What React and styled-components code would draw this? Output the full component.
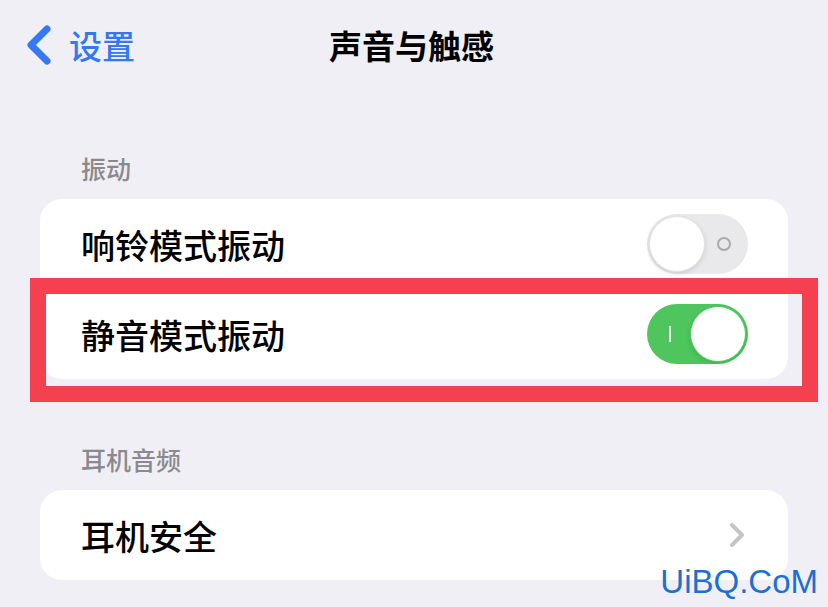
import * as React from 'react';
import styled, { createGlobalStyle } from 'styled-components';

const GlobalStyle = createGlobalStyle`
  html, body {
    margin: 0;
    padding: 0;
    background: #f0eff5;
  }
  body {
    font-family: 'Noto Sans CJK SC', 'Noto Sans', sans-serif;
  }
`;

const Page = styled.div`
  position: relative;
  width: 828px;
  height: 607px;
  overflow: hidden;
  background: #f0eff5;
  display: flex;
  flex-direction: column;
`;

const NavBar = styled.div`
  height: 90px;
  display: grid;
  grid-template-columns: 1fr auto 1fr;
  align-items: center;
  padding: 0 0 0 25px;
`;

const BackButton = styled.div`
  display: flex;
  align-items: center;
  gap: 16px;
  color: #3478f6;
  font-size: 33px;
  font-weight: 500;
  line-height: 1;
`;

const Title = styled.div`
  font-size: 33px;
  font-weight: 700;
  color: #000;
  line-height: 1;
  margin-right: 30px;
`;

const Content = styled.div`
  padding: 0 40px;
  display: flex;
  flex-direction: column;
`;

const SectionHeader = styled.div`
  margin-top: ${(props) => props.top}px;
  margin-bottom: 16px;
  padding-left: 41px;
  font-size: 25px;
  line-height: 30px;
  color: #8a8a8e;
  font-weight: 500;
`;

const Card = styled.div`
  background: #fff;
  border-radius: 22px;
  overflow: hidden;
`;

const Row = styled.div`
  height: 90px;
  display: flex;
  align-items: center;
  justify-content: space-between;
  padding: 0 ${(props) => (props.chevron ? 43 : 40)}px 0 41px;
  font-size: 34px;
  font-weight: 500;
  color: #000;
`;

const Track = styled.div`
  position: relative;
  width: 101px;
  height: 60px;
  border-radius: 30px;
  background: ${(props) => (props.on ? '#4ec65d' : '#e9e9eb')};
  flex-shrink: 0;
`;

const Knob = styled.div`
  position: absolute;
  top: 2px;
  left: ${(props) => (props.on ? '43px' : '2px')};
  width: 56px;
  height: 56px;
  border-radius: 50%;
  background: #fff;
  box-sizing: border-box;
  border: 1px solid ${(props) => (props.on ? '#4ec65d' : '#e2e2e4')};
  box-shadow: 0 2px 5px rgba(0, 0, 0, 0.12);
`;

const OffMark = styled.div`
  position: absolute;
  top: 23px;
  left: 70px;
  width: 14px;
  height: 14px;
  box-sizing: border-box;
  border: 2px solid #a9a9ad;
  border-radius: 50%;
`;

const OnMark = styled.div`
  position: absolute;
  top: 22px;
  left: 22px;
  width: 2px;
  height: 16px;
  background: #fff;
`;

const Highlight = styled.div`
  position: absolute;
  left: 30px;
  top: 278px;
  width: 788px;
  height: 124px;
  box-sizing: border-box;
  border: 16px solid #f4404f;
  pointer-events: none;
`;

const Watermark = styled.div`
  position: absolute;
  right: 10px;
  bottom: 9px;
  font-family: 'Liberation Sans', Arial, sans-serif;
  font-size: 33px;
  color: #1c6fd4;
  line-height: 1;
`;

function Toggle({ on }) {
  return (
    <Track on={on}>
      {on ? <OnMark /> : <OffMark />}
      <Knob on={on} />
    </Track>
  );
}

function BackChevron() {
  return (
    <svg width="28" height="40" viewBox="0 0 28 40">
      <path
        d="M22 4 L6 20 L22 36"
        fill="none"
        stroke="#3478f6"
        strokeWidth="7"
        strokeLinecap="round"
        strokeLinejoin="round"
      />
    </svg>
  );
}

function RowChevron() {
  return (
    <svg width="16" height="26" viewBox="0 0 16 26">
      <path
        d="M3 3 L13 13 L3 23"
        fill="none"
        stroke="#c4c4c7"
        strokeWidth="4"
        strokeLinecap="round"
        strokeLinejoin="round"
      />
    </svg>
  );
}

export default function App() {
  return (
    <Page>
      <GlobalStyle />
      <NavBar>
        <BackButton>
          <BackChevron />
          设置
        </BackButton>
        <Title>声音与触感</Title>
        <div />
      </NavBar>
      <Content>
        <SectionHeader top={63}>振动</SectionHeader>
        <Card>
          <Row>
            响铃模式振动
            <Toggle on={false} />
          </Row>
          <Row>
            静音模式振动
            <Toggle on />
          </Row>
        </Card>
        <SectionHeader top={65}>耳机音频</SectionHeader>
        <Card>
          <Row chevron>
            耳机安全
            <RowChevron />
          </Row>
        </Card>
      </Content>
      <Highlight />
      <Watermark>UiBQ.CoM</Watermark>
    </Page>
  );
}
